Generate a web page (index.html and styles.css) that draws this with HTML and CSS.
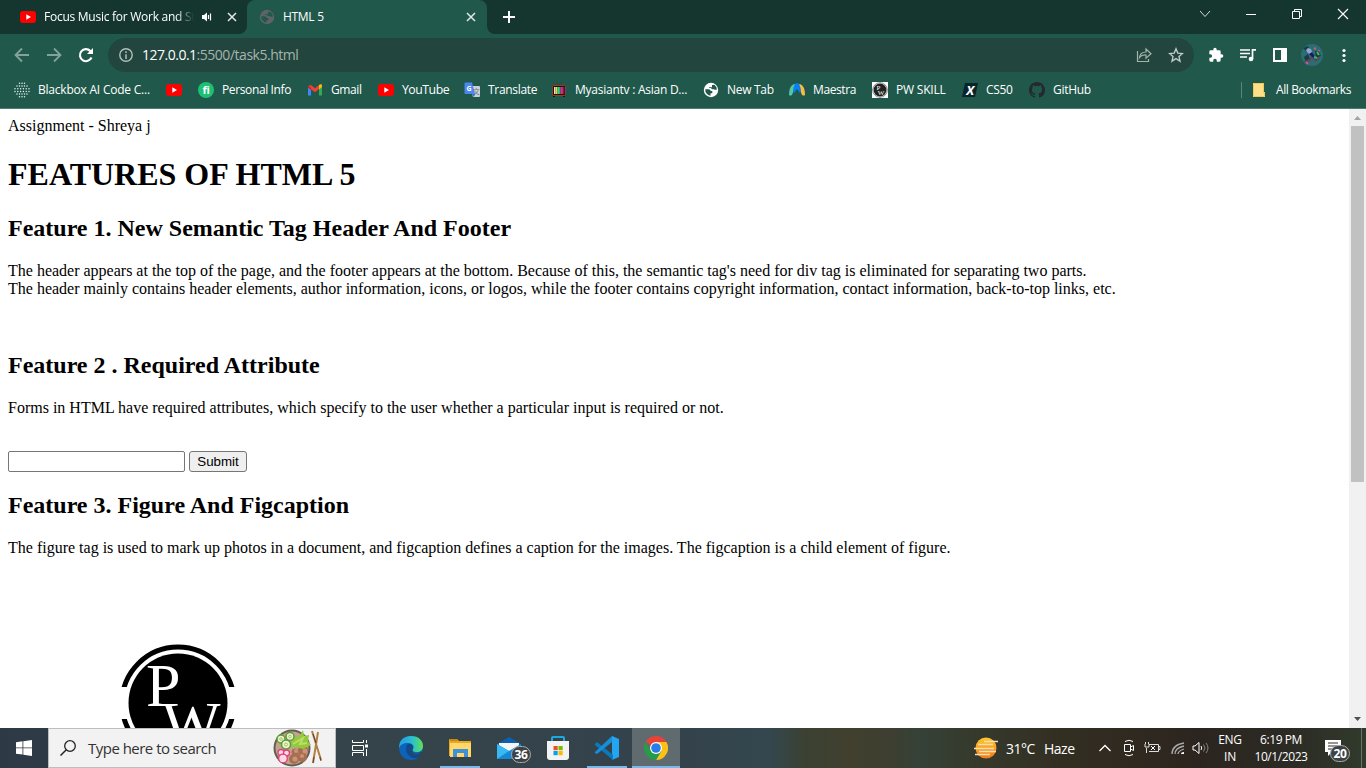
FILE: index.html
```html
<!DOCTYPE html>
<html lang="en">
<head>
<meta charset="utf-8">
<title>HTML 5</title>
<link rel="stylesheet" href="styles.css">
</head>
<body>
<svg class="defs" width="0" height="0">
  <defs>
    <symbol id="yt" viewBox="0 0 16 16"><rect y="2" width="16" height="12" rx="3" fill="#f00"/><path d="M6.300 5.300 11 8l-4.700 2.700z" fill="#fff"/></symbol>
    <symbol id="globe" viewBox="0 0 16 16"><circle cx="8" cy="8" r="7.200" fill="currentColor"/><path d="M2.300 7.200h3.200q2 0 2.300 1.700h1.500v2.300H7.500v2.600A6 6 0 0 1 2.300 7.200zM6 5.200h3V3h1.500l.5-.6a6 6 0 0 1 2.800 5.200q-1.500.7-2.800-.4H9.500Q8 7 8 6H6z" class="land"/></symbol>
    <symbol id="close" viewBox="0 0 10 10"><path d="m1 1 8 8M9 1 1 9" stroke="currentColor" stroke-width="1.500" fill="none"/></symbol>
  </defs>
</svg>
<header class="browser">
  <div class="tabs">
    <div class="tab tab-back">
      <svg width="16" height="16"><use href="#yt"/></svg>
      <span class="tab-title faded">Focus Music for Work and St</span>
      <svg class="speaker" width="12" height="12" viewBox="0 0 12 12"><path d="M1 4h2l3-2.500v9L3 8H1z" fill="#fff"/><path d="M7.500 4v4M9.500 2.500v7" stroke="#fff" fill="none" stroke-width="1.200"/></svg>
      <svg class="x x-back" width="10" height="10"><use href="#close"/></svg>
    </div>
    <div class="tab tab-front">
      <svg class="grey-globe" width="16" height="16"><use href="#globe"/></svg>
      <span class="tab-title">HTML 5</span>
      <svg class="x" width="10" height="10"><use href="#close"/></svg>
    </div>
    <div class="strip">
      <svg width="12" height="12" viewBox="0 0 12 12"><path d="M6 0v12M0 6h12" stroke="#fff" stroke-width="2"/></svg>
      <div class="window-buttons">
        <svg width="12" height="12" viewBox="0 0 12 12"><path d="m1 3 5 5.500L11 3" stroke="#d5dbd9" fill="none"/></svg>
        <svg width="12" height="12" viewBox="0 0 12 12"><path d="M1 6.500h10" stroke="#fff"/></svg>
        <svg width="12" height="12" viewBox="0 0 12 12"><path d="M1.500 3.500h7v7h-7zM3.500 3V1.500h7v7H9" stroke="#fff" fill="none"/></svg>
        <svg width="12" height="12" viewBox="0 0 12 12"><path d="m1 1 10 10M11 1 1 11" stroke="#fff" stroke-width="1.100"/></svg>
      </div>
    </div>
  </div>
  <div class="toolbar">
    <div class="nav">
      <svg width="16" height="16" viewBox="0 0 16 16"><path d="M15 8H2M8 1.500 1.500 8 8 14.500" stroke="#83a399" stroke-width="1.800" fill="none"/></svg>
      <svg width="16" height="16" viewBox="0 0 16 16"><path d="M1 8h13M8 1.500 14.500 8 8 14.500" stroke="#83a399" stroke-width="1.800" fill="none"/></svg>
      <svg width="16" height="16" viewBox="0 0 16 16"><path d="M13.500 10.500A6 6 0 1 1 12.300 4L14 5.500" stroke="#fff" stroke-width="2.100" fill="none"/><path d="M15 1v6H9z" fill="#fff"/></svg>
    </div>
    <div class="omnibox">
      <svg width="14" height="14" viewBox="0 0 14 14"><circle cx="7" cy="7" r="6.200" stroke="#b3bfbc" stroke-width="1.400" fill="none"/><path d="M7 6.200V11M7 3.300v1.600" stroke="#b3bfbc" stroke-width="1.500"/></svg>
      <span class="url"><span class="host">127.0.0.1</span><span class="url-path">:5500/task5.html</span></span>
      <svg class="share" width="16" height="16" viewBox="0 0 16 16"><path d="M1.500 4v10.500h11V12M3.500 10.500C4 6.500 6.500 5 10 5V2l5 4.700-5 4.500V8C7.500 7.800 5 8.500 3.500 10.500z" stroke="#a5b3af" stroke-width="1.200" fill="none"/></svg>
      <svg width="16" height="16" viewBox="0 0 16 16"><path d="m8 1.800 1.800 4.300 4.700.4-3.500 3.100 1 4.600-4-2.500-4 2.500 1-4.600L1.500 6.500l4.700-.4z" stroke="#bfc9c6" stroke-width="1.400" fill="none"/></svg>
    </div>
    <div class="actions">
      <svg width="16" height="16" viewBox="0 0 24 24"><path fill="#fff" d="M20.500 11H19V7a2 2 0 0 0-2-2h-4V3.500a2.500 2.500 0 0 0-5 0V5H4a2 2 0 0 0-2 2v3.800h1.500a2.700 2.700 0 0 1 0 5.400H2V20c0 1.100.9 2 2 2h3.800v-1.500a2.700 2.700 0 0 1 5.400 0V22H17a2 2 0 0 0 2-2v-4h1.500a2.500 2.500 0 0 0 0-5z"/></svg>
      <svg width="16" height="16" viewBox="0 0 16 16"><path d="M0 3h10M0 6.500h10M0 10h7" stroke="#fff" stroke-width="1.600"/><path d="M12.500 12V2.800H16" stroke="#fff" stroke-width="1.700" fill="none"/><circle cx="11" cy="12" r="2.300" fill="#fff"/></svg>
      <svg width="16" height="16" viewBox="0 0 16 16"><path fill="#fff" fill-rule="evenodd" d="M1 1h14v14H1zM3 3v10h6V3z"/></svg>
      <svg width="22" height="22" viewBox="0 0 22 22"><circle cx="11" cy="11" r="11" fill="#2b6d73"/><path d="M2 4 7 2l2 4-3 2zM3 13l4-3 2 5-4 3zM14 7l4 1 2 4-5 2z" fill="#183c45"/><path d="m6 5 4 2 3 4 3 5-5-3-4-4z" fill="#161c70"/><path d="m5 6 2-2 3 1 1 3-3 2-2-2z" fill="#91a8cd"/><path d="m3 18 7-4 5 3 4-3M11 13l-3 5" stroke="#763846" fill="none"/><path d="m13 4 2 1M5 18l2 2M18 6v1" stroke="#d35189" stroke-width="2"/><path d="m16 8 2 3M13 13l3 1" stroke="#56ae57" stroke-width="2"/></svg>
      <svg class="dots" width="4" height="16" viewBox="0 0 4 16"><circle cx="2" cy="3.500" r="1.600" fill="#fff"/><circle cx="2" cy="8.500" r="1.600" fill="#fff"/><circle cx="2" cy="13.500" r="1.600" fill="#fff"/></svg>
    </div>
  </div>
  <nav class="bookmarks">
    <a class="bm w152"><svg width="16" height="16" viewBox="0 0 16 16"><g fill="none" stroke="#e8efed" stroke-linecap="round" stroke-width="1.500"><path d="M5.500 1.300h6" stroke-dasharray="0 2.500"/><path d="M3 4h11M3 12h11" stroke-dasharray="0 2.500"/><path d="M1 6.700h14.500M1 9.400h14.500" stroke-dasharray="0 2.800"/><path d="M5.500 14.700h6" stroke-dasharray="0 2.500"/></g></svg><span class="t1">Blackbox AI Code C...</span></a>
    <a class="bm w32"><svg width="16" height="16"><use href="#yt"/></svg></a>
    <a class="bm w109"><svg width="16" height="16" viewBox="0 0 16 16"><circle cx="8" cy="8" r="8" fill="#1dbf73"/><text x="8" y="12" class="mark-fi">fi</text></svg><span class="t7">Personal Info</span></a>
    <a class="bm w71"><svg width="16" height="16" viewBox="0 0 16 16"><path d="M1 4v9.500h3V7z" fill="#4285f4"/><path d="M15 4v9.500h-3V7z" fill="#34a853"/><path d="m1 4 3-1 4 3.300L12 3v4l-4 3.200L1 5z" fill="#ea4335"/><path d="m12 3 2-1q1 .5 1 2v1l-3 2.500z" fill="#fbbc04"/><path d="M1 3.500 4 6v2L1 5.500z" fill="#c5221f"/></svg><span class="t7">Gmail</span></a>
    <a class="bm w86"><svg width="16" height="16"><use href="#yt"/></svg><span class="t2">YouTube</span></a>
    <a class="bm w87"><svg width="16" height="16" viewBox="0 0 16 16"><path d="M6 4h9q1 0 1 1v9q0 1-1 1H9z" fill="#cdd1d3"/><path d="M1.500.5H8L11 12H1.500Q.5 12 .5 11V1.500q0-1 1-1z" fill="#4a87ee"/><text x="5" y="8.500" class="mark-g">G</text><text x="12.200" y="12" class="mark-wen">文</text><path d="m8 12 3 0-1 3z" fill="#3367d6"/></svg><span>Translate</span></a>
    <a class="bm w152"><svg width="16" height="16" viewBox="0 0 16 16"><path d="m5 0 3 3 3-3" stroke="#39433d" fill="none"/><path d="M1 3h14v11h-1v1h-2v-1H4v1H2v-1H1z" fill="#20120c"/><path d="M1.500 3.500h13v10h-13z" fill="none" stroke="#913d23"/><path d="M3 5h1.500v7H3z" fill="#ddd"/><path d="M4.500 5h2v7h-2z" fill="#ed2"/><path d="M6.500 5h1.500v7H6.500z" fill="#2cc"/><path d="M8 5h1.500v7H8z" fill="#3b3"/><path d="M9.500 5h1.500v7H9.500z" fill="#d2a"/><path d="M11 5h1.500v7H11z" fill="#e22"/><path d="M12.500 5h1v7h-1z" fill="#23c"/></svg><span class="t3">Myasiantv : Asian D...</span></a>
    <a class="bm w86 white-globe"><svg width="16" height="16"><use href="#globe"/></svg><span>New Tab</span></a>
    <a class="bm w83"><svg width="16" height="16" viewBox="0 0 16 16"><path d="M0 13Q0 4 5 2l2 1-4 10q-2 1-3 0z" fill="#54c6a5"/><path d="M16 13Q16 4 11 2L9 3l4 10q2 1 3 0z" fill="#fbbc3d"/><path d="M4 9Q5 1 8 1t4 8l-1 2-3-4-3 4z" fill="#087ff5"/></svg><span class="t4">Maestra</span></a>
    <a class="bm w90"><svg width="16" height="16" viewBox="0 0 16 16"><path fill="#fff" d="M0 0h16v16H0z"/><circle cx="8" cy="8" r="6.500" fill="#222"/><circle cx="8" cy="8" r="7.300" fill="none" stroke="#555" stroke-width=".7"/><text x="6.500" y="8" class="mark-pw">P</text><text x="9" y="13" class="mark-pw">W</text></svg><span class="t5">PW SKILL</span></a>
    <a class="bm w67"><svg width="16" height="16" viewBox="0 0 16 16"><path d="M3 1h13l-3 14H0z" fill="#0a242b"/><text x="8" y="12.500" class="mark-x">X</text></svg><span>CS50</span></a>
    <a class="bm"><svg width="16" height="16" viewBox="0 0 16 16"><path fill="#24292f" d="M8 0C3.580 0 0 3.580 0 8c0 3.540 2.290 6.530 5.470 7.590.4.070.55-.17.55-.38 0-.19-.01-.82-.01-1.490-2.010.37-2.530-.49-2.690-.94-.09-.23-.48-.94-.82-1.130-.28-.15-.68-.52-.01-.53.63-.01 1.080.58 1.230.82.72 1.210 1.870.87 2.330.66.070-.52.28-.87.51-1.070-1.780-.2-3.640-.89-3.640-3.950 0-.87.31-1.590.82-2.150-.08-.2-.36-1.020.08-2.120 0 0 .67-.21 2.200.82a7.600 7.600 0 0 1 4 0c1.530-1.040 2.200-.82 2.200-.82.44 1.100.16 1.920.08 2.120.51.56.82 1.270.82 2.150 0 3.070-1.870 3.750-3.650 3.950.29.25.54.73.54 1.480 0 1.070-.01 1.930-.01 2.200 0 .21.150.46.55.38A8 8 0 0 0 16 8c0-4.420-3.580-8-8-8z"/></svg><span>GitHub</span></a>
    <a class="bm all"><svg width="16" height="16" viewBox="0 0 16 16"><path d="M1 1h11v9h1v5H1z" fill="#ffe08a"/><path d="M1.500 1.500h10v9h1v4h-11z" stroke="#f3c94f" fill="none"/></svg><span class="t8">All Bookmarks</span></a>
  </nav>
</header>
<div class="viewport">
  <main class="page">
    <div>Assignment - Shreya j</div>
    <h1>FEATURES OF HTML 5</h1>
    <h2>Feature 1. New Semantic Tag Header And Footer</h2>
    <p>The header appears at the top of the page, and the footer appears at the bottom. Because of this, the semantic tag's need for div tag is eliminated for separating two parts.<br>The header mainly contains header elements, author information, icons, or logos, while the footer contains copyright information, contact information, back-to-top links, etc.</p>
    <br>
    <h2 class="snug">Feature 2 . Required Attribute</h2>
    <p>Forms in HTML have required attributes, which specify to the user whether a particular input is required or not.</p>
    <form class="form"><input class="field" type="text" required><button class="submit" type="button">Submit</button></form>
    <h2 class="snug">Feature 3. Figure And Figcaption</h2>
    <p>The figure tag is used to mark up photos in a document, and figcaption defines a caption for the images. The figcaption is a child element of figure.</p>
    <figure class="figure">
      <svg width="120" height="120" viewBox="0 0 120 120">
        <defs><clipPath id="bands"><path d="M0 0h120v44H0zM0 76h120v44H0z"/></clipPath></defs>
        <circle cx="60" cy="60" r="56" fill="none" stroke="#000" stroke-width="5" clip-path="url(#bands)"/>
        <circle cx="60" cy="60" r="49.500"/>
        <text x="28" y="63" class="logo-letter">P</text>
        <text x="44" y="101" class="logo-letter">W</text>
      </svg>
    </figure>
  </main>
  <div class="scrollbar">
    <svg width="17" height="17" viewBox="0 0 17 17"><path d="m5 11 3.500-4 3.500 4z" fill="#a3a3a3"/></svg>
    <div class="thumb"></div>
    <svg class="down" width="17" height="17" viewBox="0 0 17 17"><path d="m5 6 3.500 4L12 6z" fill="#505050"/></svg>
  </div>
</div>
<footer class="taskbar">
  <div class="start"><svg width="16" height="16" viewBox="0 0 16 16"><path fill="#fff" d="m0 2.200 6.500-.9v6.200H0zM7.300 1.200 16 0v7.500H7.300zM0 8.300h6.500v6.300L0 13.700zm7.300 0H16V16l-8.700-1.300z"/></svg></div>
  <div class="search">
    <svg width="16" height="16" viewBox="0 0 16 16"><circle cx="10" cy="6" r="5.300" fill="none" stroke="#222" stroke-width="1.300"/><path d="M6.300 9.800.5 15.600" stroke="#222" stroke-width="1.400"/></svg>
    <span>Type here to search</span>
    <svg class="bowl" width="50" height="38" viewBox="0 0 50 38"><circle cx="19" cy="19" r="18.500" fill="#665b50"/><circle cx="19" cy="19" r="16.500" fill="#bea68c"/><g fill="#a76e51"><circle cx="22" cy="23" r="3.500"/><circle cx="30" cy="21" r="5"/><circle cx="21" cy="30" r="5"/><circle cx="29" cy="28" r="5"/></g><g fill="#ca9478"><circle cx="23" cy="22" r="2"/><circle cx="32" cy="22" r="2.500"/><circle cx="29" cy="27" r="2"/><circle cx="22" cy="30" r="2.500"/></g><path d="m17 18 4-11 5 1 4-7 1 6 5-1-1 6 3 4-8 4-7-2z" fill="#94c83d"/><path d="m20 15 10-6-3 6 7-1" stroke="#b9df67" stroke-width="2" fill="none"/><g fill="#e9f2c8" stroke="#5d9a38" stroke-width="1.500"><circle cx="8" cy="10" r="4"/><circle cx="17" cy="7.500" r="4"/><circle cx="13" cy="15.500" r="4.500"/></g><g fill="none" stroke="#a5c779"><circle cx="8" cy="10" r="1.300"/><circle cx="17" cy="7.500" r="1.300"/><circle cx="13" cy="15.500" r="1.500"/></g><g fill="#f9dce2" stroke="#e53c80" stroke-width="1.300"><circle cx="8" cy="23.500" r="3"/><circle cx="13.500" cy="24" r="3"/><circle cx="10" cy="29.500" r="4.300"/></g><path d="m39 2 9 29M45 3l-5 31" stroke="#b18045" stroke-width="2"/><path d="m40 5 3 9M47 28l1 4M41 28l-1 6" stroke="#604028"/></svg>
  </div>
  <div class="task taskview"><svg width="18" height="16" viewBox="0 0 18 16"><path d="M1.500 0v2.500h11V0M1.500 16v-3.500h11V16M1.500 5.500h11v5h-11zM15.500 0v3M15.500 9v7" stroke="#fff" fill="none"/><path d="M14 4.500h3v3h-3z" fill="#fff"/></svg></div>
  <div class="task"><svg width="24" height="24" viewBox="0 0 24 24"><defs><linearGradient id="eg" x2="1"><stop offset=".25" stop-color="#27a7e2"/><stop offset=".6" stop-color="#2dc4c4"/><stop offset="1" stop-color="#63df50"/></linearGradient></defs><circle cx="12" cy="12" r="12" fill="#0d63b9"/><path d="M0 12C0 4 5 0 12 0c8 0 12 5 12 10 0 4-3 6-6 6-4 0-5-1-4-3 2-3-1-6-5-6-5 0-8 2-9 5z" fill="url(#eg)"/><path d="M9 8c-5 5 0 15 8 14 3 0 5-2 6-4-6 3-11 1-11-3 0-2 1-3 2-3 0-3-2-5-5-4z" fill="#114a8b"/><path d="M14 12c-2 4 1 6 4 6 3 0 5-1 6-2l-1 2c-5 3-11 1-11-3 0-2 1-3 2-3z" fill="#35434c"/><path d="M24 16h-3l-1 2 3 1z" fill="#35434c"/></svg></div>
  <div class="task open"><svg width="22" height="20" viewBox="0 0 22 20"><path d="M0 1h8l2 2h12v15H0z" fill="#e8a91e"/><path d="M1 5h21v14H1z" fill="#ffd869"/><path d="M0 1h8l1 2H1z" fill="#c98813"/><path d="M4 11h15v8h-4v-4H8v4H4z" fill="#3c91d9"/></svg></div>
  <div class="task mail"><svg width="24" height="24" viewBox="0 0 24 24"><path d="M0 8 12 1l12 7v3H0z" fill="#0b60af"/><path d="M2 7h20v5l-10 5-10-5z" fill="#f5f5f5"/><path d="m0 8 12 7 12-7v15H0z" fill="#1689d4"/><path d="m0 8 12 7-12 8z" fill="#39b9f3"/></svg><b class="count">36</b></div>
  <div class="task"><svg width="24" height="24" viewBox="0 0 24 24"><path d="M6 6V2q0-1 1-1h10q1 0 1 1v4" stroke="#1ba9df" stroke-width="2" fill="none"/><path d="M1 5h22v16q0 3-3 3H4q-3 0-3-3z" fill="#f3f3f3"/><path d="M7.500 10h4.200v4.200H7.500z" fill="#ef4f27"/><path d="M12.500 10h4.200v4.200h-4.200z" fill="#7db900"/><path d="M7.500 15h4.200v4.200H7.500z" fill="#00a3ed"/><path d="M12.500 15h4.200v4.200h-4.200z" fill="#ffb800"/></svg></div>
  <div class="task open"><svg width="24" height="24" viewBox="0 0 24 24"><path d="m17 0 7 3v18l-7 3z" fill="#23a5ef"/><path d="m0 8 2-2 16 13v5L0 9z" fill="#087abf"/><path d="M0 16 17 0v6L2 18l-2-1z" fill="#168fd8"/></svg></div>
  <div class="task open active"><svg width="24" height="24" viewBox="0 0 24 24"><path d="M12 12 1.600 6a12 12 0 0 1 20.800 0z" fill="#ea4335"/><path d="M12 12V6h10.400A12 12 0 0 1 12 24l5.200-9z" fill="#fbc116"/><path d="M1.600 6A12 12 0 0 0 12 24l5.200-9L12 12l-5.200 3z" fill="#269b48"/><circle cx="12" cy="12" r="6" fill="#fff"/><circle cx="12" cy="12" r="4.800" fill="#287de9"/></svg></div>
  <div class="tray">
    <svg width="24" height="22" viewBox="0 0 24 22"><defs><linearGradient id="sun" x2="0" y2="1"><stop stop-color="#ffc82a"/><stop offset="1" stop-color="#f27a1a"/></linearGradient></defs><circle cx="12" cy="11" r="10.500" fill="url(#sun)"/><path d="M10 4.500h14M4 7.500h15M0 11.500h20M5 14.500h17M1 17.500h15" stroke="#f5deb4" stroke-width="1.500"/></svg>
    <span class="temp">31°C</span><span class="haze">Haze</span>
    <svg class="chevron" width="12" height="12" viewBox="0 0 12 12"><path d="m.5 9 5.500-5.500L11.500 9" stroke="#fff" stroke-width="1.300" fill="none"/></svg>
    <svg class="camera" width="12" height="18" viewBox="0 0 12 18"><path d="M1.500 5.500h6v7h-6zM7.500 8 10.500 6.500v5L7.500 10M2 2.500Q6 0 10 2.500M2 15.500q4 2.500 8 0" stroke="#fff" fill="none"/></svg>
    <svg class="battery" width="17" height="14" viewBox="0 0 17 14"><path d="M5 3.500h9.500v7H5M15 5.500h1v3h-1M2.500 12V7M1 3v3h4V3M1.500 1v2M4.500 1v2" stroke="#ddd" fill="none"/><path d="m7 5 4 4m0-4L7 9" stroke="#fff"/></svg>
    <svg class="wifi" width="14" height="14" viewBox="0 0 14 14"><path d="M1 13Q1 4 13 2M4 13q0-6 9-8M7 13q0-3 6-5" stroke="#aaa" stroke-width="1.300" fill="none"/><path d="M10 13q0-2 3-2v2z" fill="#fff"/></svg>
    <svg class="sound" width="17" height="14" viewBox="0 0 17 14"><path d="M1 5h2l4-3.500v11L3 9H1z" stroke="#fff" fill="none"/><path d="M9 5q1.500 2 0 4" stroke="#fff" fill="none"/><path d="M11.500 3.500q3 3.500 0 7M14 2q4 5 0 10" stroke="#888" fill="none"/></svg>
    <div class="lang">ENG<br>IN</div>
    <div class="clock">6:19 PM<br>10/1/2023</div>
    <div class="notice"><svg width="18" height="18" viewBox="0 0 18 18"><path d="M1 1h16v12H8l-4 4v-4H1z" fill="#fff"/><path d="M4 4h10M4 7h10M4 10h7" stroke="#322c27" stroke-width="1.200"/></svg><b class="count">20</b></div>
    <div class="desktop-edge"></div>
  </div>
</footer>
</body>
</html>
```
FILE: styles.css
```css
* { box-sizing: border-box; }
html, body { margin: 0; height: 768px; overflow: hidden; }
body { display: flex; flex-direction: column; background: #fff; }
svg { display: block; flex: none; }
.defs { position: absolute; }

.browser { height: 109px; background: #20594b; border-bottom: 1px solid #52796f; color: #fff; font: 12px/16px "Open Sans", "Noto Sans", sans-serif; letter-spacing: -.3px; }
.tabs { display: flex; height: 34px; background: #20594b; }
.tab { display: flex; align-items: center; height: 34px; }
.tab-back { width: 247px; padding-left: 20px; background: #15352f; border-bottom-right-radius: 8px; }
.tab-front { width: 240px; padding: 0 11px 0 12px; background: #20594b; border-radius: 8px 8px 0 0; box-shadow: 0 -8px 0 8px #15352f; clip-path: inset(0); }
.tab-title { margin-left: 8px; white-space: nowrap; }
.faded { width: 150px; overflow: hidden; letter-spacing: -.26px; -webkit-mask-image: linear-gradient(90deg, #000 88%, transparent); mask-image: linear-gradient(90deg, #000 88%, transparent); }
.speaker { margin-left: 7px; }
.x { margin-left: auto; color: #e3eae8; }
.x-back { margin: 0 0 0 14px; }
.land { fill: #20594b; }
.grey-globe { color: #5f6368; }
.strip { flex: 1; display: flex; align-items: center; justify-content: space-between; padding: 0 17px 0 16px; background: #15352f; border-bottom-left-radius: 8px; }
.window-buttons { display: flex; gap: 34px; margin-bottom: 6px; }
.toolbar { display: flex; align-items: center; height: 38px; padding-top: 4px; }
.nav { display: flex; gap: 16px; width: 108px; padding-left: 14px; }
.omnibox { display: flex; align-items: center; width: 1086px; height: 34px; padding: 0 10px 0 11px; background: #22453d; border-radius: 17px; }
.url { margin-left: 9px; font-size: 14px; }
.host { letter-spacing: -.5px; }
.url-path { color: #a5b4b0; letter-spacing: -.47px; }
.share { margin: 0 16px 0 auto; }
.actions { display: flex; align-items: center; gap: 16px; padding-left: 14px; }
.actions svg:nth-child(4) { margin: 0 1px 0 -3px; }
.actions .dots { margin-left: 2px; }
.bookmarks { display: flex; align-items: center; height: 36px; padding-left: 14px; }
.bm { display: flex; align-items: center; gap: 8px; white-space: nowrap; }
.t1 { letter-spacing: -.22px; }
.t2 { letter-spacing: -.45px; }
.t3 { letter-spacing: -.25px; }
.t4 { letter-spacing: -.4px; }
.t5 { letter-spacing: -.2px; }
.t7, .t8 { letter-spacing: -.38px; }
.w152 { width: 152px; }
.w32 { width: 32px; }
.w109 { width: 109px; }
.w71 { width: 71px; }
.w86 { width: 86px; }
.w87 { width: 87px; }
.w83 { width: 83px; }
.w90 { width: 90px; }
.w67 { width: 67px; }
.w86 .t2 { letter-spacing: -.5px; word-spacing: 0; font-size: 12.300px; }
.white-globe { color: #fff; }
.mark-fi { font: bold 11px "Open Sans", sans-serif; fill: #fff; text-anchor: middle; }
.mark-g { font: bold 7px "Open Sans", sans-serif; fill: #fff; text-anchor: middle; }
.mark-wen { font: 7px "Noto Sans CJK SC", sans-serif; fill: #607d8b; text-anchor: middle; }
.mark-pw { font: 7px "Liberation Serif", serif; fill: #fff; text-anchor: middle; letter-spacing: 0; }
.mark-x { font: italic bold 13px "Open Sans", sans-serif; fill: #fff; text-anchor: middle; }
.all { margin-left: auto; margin-right: 15px; padding-left: 10px; border-left: 1px solid #5b857a; }

.viewport { display: flex; height: 619px; background: #fff; }
.page { flex: 1; height: 619px; padding: 8px; overflow: hidden; color: #000; font: 16px/18px "Liberation Serif", "Times New Roman", serif; }
h1 { margin: 21px 0; font-size: 32px; line-height: 37px; }
h2 { margin: 20px 0; font-size: 24px; line-height: 28px; }
.snug { margin-top: 19px; }
p { margin: 0 0 16px; }
.form { display: flex; gap: 4px; margin-top: 34px; }
.field { width: 177px; height: 21px; padding: 1px 2px; border: 1px solid #767676; border-radius: 2px; background: #fff; }
.submit { width: 58px; height: 21px; padding: 0; border: 1px solid #767676; border-radius: 3px; background: #efefef; color: #000; font: 13.333px "Liberation Sans", Arial, sans-serif; }
.figure { margin: 86px 0 0 109.500px; }
.logo-letter { font: 62px "Liberation Serif", serif; fill: #fff; }
.scrollbar { display: flex; flex-direction: column; align-items: center; width: 17px; background: #f1f1f1; }
.thumb { width: 13px; height: 356px; background: #c1c1c1; }
.down { margin-top: auto; }

.taskbar { display: flex; height: 40px; color: #fff; font: 12px/17px "Open Sans", "Noto Sans", sans-serif; background: linear-gradient(90deg, #2d3945 0, #35434b 336px, #34434b 690px, #34474e 770px, #3b4132 805px, #41402f 850px, #3d3e30 890px, #354137 920px, #353b2d 965px, #332e22 1060px, #2c251f 1200px, #2b2923 1280px, #313a2c 1366px); }
.start { width: 48px; display: grid; place-items: center; }
.search { display: flex; align-items: center; width: 288px; padding-left: 11px; background: #f2f2f2; border: 1px solid #bdbdbd; color: #333; font-size: 15px; letter-spacing: -.52px; white-space: nowrap; }
.search span { margin-left: 12px; }
.bowl { margin: 0 12px 0 auto; }
.task { display: grid; place-items: center; width: 48px; height: 40px; margin-left: 1px; position: relative; }
.taskview { margin: 0 2px 0 0; }
.open { background: linear-gradient(#76b9ed, #76b9ed) 50% 100% / 40px 2px no-repeat; }
.active { background: linear-gradient(#76b9ed, #76b9ed) 50% 100% / 48px 2px no-repeat, #606b70; }
.count { position: absolute; display: grid; place-items: center; width: 20px; height: 17px; border: 1px solid #aaa; border-radius: 9px; background: #3b4347; font-size: 12px; line-height: 14px; letter-spacing: -.3px; }
.mail .count { left: 26px; top: 18px; }
.tray { flex: 1; display: flex; align-items: center; padding-left: 294px; white-space: nowrap; }
.temp { width: 30px; margin-left: 8px; font-size: 14px; letter-spacing: -.5px; }
.haze { width: 31px; margin-left: 8px; font-size: 14px; letter-spacing: -.5px; }
.chevron { margin-left: 24px; }
.camera { margin-left: 12px; }
.battery { margin-left: 9px; }
.wifi { margin-left: 10px; }
.sound { margin-left: 7px; }
.lang { width: 26px; margin-left: 8px; text-align: center; letter-spacing: -.3px; }
.clock { width: 54px; margin-left: 11px; text-align: center; letter-spacing: -.42px; }
.notice { position: relative; width: 28px; margin-left: 16px; }
.notice .count { left: 6px; top: 6px; }
.desktop-edge { width: 1px; height: 40px; margin-left: auto; margin-right: 4px; background: #70716a; }
```
